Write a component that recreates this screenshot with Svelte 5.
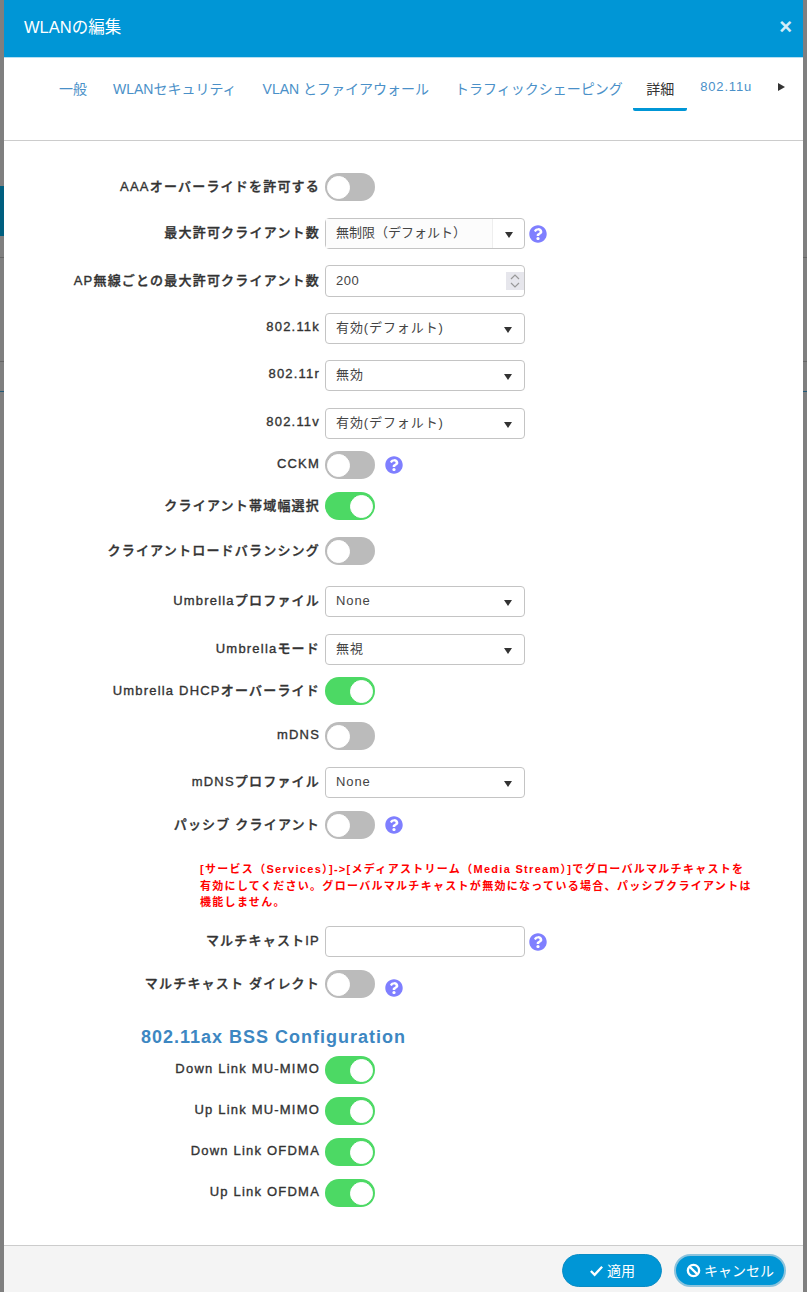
<script>
	const tabs = ['一般', 'WLANセキュリティ', 'VLAN とファイアウォール', 'トラフィックシェーピング', '詳細'];

	const rowsTop = [
		{ label: 'AAAオーバーライドを許可する', type: 'toggle', gap: 0 },
		{ label: '最大許可クライアント数', type: 'split', value: '無制限（デフォルト）', help: true, gap: 17 },
		{ label: 'AP無線ごとの最大許可クライアント数', type: 'number', value: '200', gap: 16 },
		{ label: '802.11k', type: 'select', value: '有効(デフォルト)', gap: 16 },
		{ label: '802.11r', type: 'select', value: '無効', gap: 16 },
		{ label: '802.11v', type: 'select', value: '有効(デフォルト)', gap: 17 },
		{ label: 'CCKM', type: 'toggle', help: true, gap: 12 },
		{ label: 'クライアント帯域幅選択', type: 'toggle', on: true, gap: 13 },
		{ label: 'クライアントロードバランシング', type: 'toggle', gap: 17 },
		{ label: 'Umbrellaプロファイル', type: 'select', value: 'None', gap: 21 },
		{ label: 'Umbrellaモード', type: 'select', value: '無視', gap: 17 },
		{ label: 'Umbrella DHCPオーバーライド', type: 'toggle', on: true, gap: 12 },
		{ label: 'mDNS', type: 'toggle', gap: 17 },
		{ label: 'mDNSプロファイル', type: 'select', value: 'None', gap: 17 },
		{ label: 'パッシブ クライアント', type: 'toggle', help: true, gap: 13 }
	];

	const rowsBottom = [
		{ label: 'マルチキャストIP', type: 'text', help: true, gap: 0 },
		{ label: 'マルチキャスト ダイレクト', type: 'toggle', help: true, drop: true, gap: 13 }
	];

	const bssRows = [
		{ label: 'Down Link MU-MIMO', type: 'toggle', on: true, gap: 0 },
		{ label: 'Up Link MU-MIMO', type: 'toggle', on: true, gap: 13 },
		{ label: 'Down Link OFDMA', type: 'toggle', on: true, gap: 13 },
		{ label: 'Up Link OFDMA', type: 'toggle', on: true, gap: 13 }
	];
</script>

{#snippet help(wide, drop)}
	<svg class="help" class:wide class:drop viewBox="0 0 512 512" aria-hidden="true">
		<path
			d="M504 256c0 136.997-111.043 248-248 248S8 392.997 8 256C8 119.083 119.043 8 256 8s248 111.083 248 248zM262.655 90c-54.497 0-89.255 22.957-116.549 63.758-3.536 5.286-2.353 12.415 2.715 16.258l34.699 26.31c5.205 3.947 12.621 3.008 16.665-2.122 17.864-22.658 30.113-35.797 57.303-35.797 20.429 0 45.698 13.148 45.698 32.958 0 14.976-12.363 22.667-32.534 33.976C247.128 238.528 216 254.941 216 296v4c0 6.627 5.373 12 12 12h56c6.627 0 12-5.373 12-12v-1.333c0-28.462 83.186-29.647 83.186-106.667 0-58.002-60.165-106-116.531-106zM256 338c-25.365 0-46 20.635-46 46 0 25.364 20.635 46 46 46s46-20.636 46-46c0-25.365-20.635-46-46-46z"
		/>
	</svg>
{/snippet}

{#snippet row(r)}
	<div class="row" style:margin-top="{r.gap}px">
		<span class="label">{r.label}</span>
		{#if r.type === 'toggle'}
			<span class="toggle" class:on={r.on}><span class="knob"></span></span>
			{#if r.help}{@render help(true, r.drop)}{/if}
		{:else if r.type === 'split'}
			<div class="field split">
				<span class="split-value">{r.value}</span>
				<span class="split-btn"><i class="caret"></i></span>
			</div>
			{@render help(false, false)}
		{:else if r.type === 'select'}
			<div class="field select">
				<span>{r.value}</span>
				<i class="caret"></i>
			</div>
		{:else if r.type === 'number'}
			<div class="field number">
				<span>{r.value}</span>
				<span class="spin">
					<svg viewBox="0 0 14 18" aria-hidden="true">
						<path d="M3 7l4-4 4 4M3 11l4 4 4-4" />
					</svg>
				</span>
			</div>
		{:else}
			<div class="field"></div>
			{#if r.help}{@render help(false, false)}{/if}
		{/if}
	</div>
{/snippet}

<div class="backdrop">
	<div class="strip-teal"></div>
	<div class="page-line l1"></div>
	<div class="page-line l2"></div>
	<div class="page-line l3"></div>
	<div class="modal">
		<header class="head">
			<h1>WLANの編集</h1>
			<span class="close">×</span>
		</header>

		<nav class="tabs">
			{#each tabs as tab, i}
				<span class="tab" class:active={i === tabs.length - 1}>{tab}</span>
			{/each}
			<span class="tab tab-up">802.11u</span>
			<i class="more"></i>
		</nav>

		<div class="body">
			{#each rowsTop as r}
				{@render row(r)}
			{/each}

			<p class="note">
				[サービス（Services）]->[メディアストリーム（Media Stream）]でグローバルマルチキャストを<br />有効にしてください。グローバルマルチキャストが無効になっている場合、パッシブクライアントは<br />機能しません。
			</p>

			{#each rowsBottom as r}
				{@render row(r)}
			{/each}

			<h2>802.11ax BSS Configuration</h2>

			{#each bssRows as r}
				{@render row(r)}
			{/each}
		</div>

		<footer class="foot">
			<button class="btn apply">
				<svg viewBox="0 0 16 16" aria-hidden="true"><path d="M2 8.500l4 4 8-8.500" /></svg>
				適用
			</button>
			<button class="btn cancel">
				<svg viewBox="0 0 16 16" aria-hidden="true">
					<circle cx="8" cy="8" r="6" />
					<path d="M3.800 3.800l8.400 8.400" />
				</svg>
				キャンセル
			</button>
		</footer>
	</div>
</div>

<style>
	:global(body) {
		margin: 0;
		background: #7f7f7f;
	}

	.backdrop {
		position: relative;
		height: 1292px;
		overflow: hidden;
		padding: 0 4px;
		box-sizing: border-box;
		font-family: 'Liberation Sans', 'Noto Sans CJK JP', sans-serif;
		color: #333;
	}

	.strip-teal {
		position: absolute;
		left: 0;
		top: 186px;
		width: 4px;
		height: 50px;
		background: #005f7f;
	}

	.page-line {
		position: absolute;
		left: 0;
		right: 0;
		height: 1px;
		background: #666;
	}

	.l1 {
		top: 257px;
	}

	.l2 {
		top: 361px;
	}

	.l3 {
		top: 391px;
		background: #225a78;
	}

	.modal {
		position: relative;
		height: 100%;
		background: #fff;
		display: flex;
		flex-direction: column;
	}

	.head {
		height: 58px;
		background: #0096d6;
		border-bottom: 1px solid #b5dff2;
		box-sizing: border-box;
		display: flex;
		align-items: center;
		justify-content: space-between;
		padding: 0 11px 5px 20px;
		color: #fff;
		flex-shrink: 0;
	}

	h1 {
		margin: 0;
		font-size: 16.500px;
		font-weight: 400;
	}

	.close {
		font-size: 22px;
		font-weight: 700;
		color: #d3edf8;
		line-height: 1;
		margin-top: 2px;
	}

	.tabs {
		height: 83px;
		flex-shrink: 0;
		border-bottom: 1px solid #ccc;
		box-sizing: border-box;
		display: flex;
		align-items: flex-start;
		padding: 19px 0 0 42px;
		font-size: 14px;
	}

	.tab {
		height: 31px;
		padding: 0 13px;
		color: #4a90c8;
		line-height: 24px;
		white-space: nowrap;
		box-sizing: content-box;
	}

	.tab.active {
		color: #333;
		border-bottom: 3px solid #0096d6;
		border-radius: 2px;
		margin-left: -2.500px;
	}

	.tab-up {
		line-height: 20px;
		letter-spacing: 0.800px;
		font-size: 13px;
	}

	.more {
		width: 0;
		height: 0;
		margin: 6px 0 0 13px;
		border-left: 7px solid #333;
		border-top: 4px solid transparent;
		border-bottom: 4px solid transparent;
	}

	.body {
		flex: 1;
		padding-top: 32px;
	}

	.row {
		display: flex;
		align-items: center;
		gap: 5px;
	}

	.label {
		width: 316px;
		flex-shrink: 0;
		text-align: right;
		font-size: 13px;
		font-weight: 500;
		letter-spacing: 1.200px;
		-webkit-text-stroke: 0.350px #333;
		color: #333;
		white-space: nowrap;
		position: relative;
		top: -2px;
	}

	.toggle {
		width: 50px;
		height: 28px;
		border-radius: 14px;
		background: #bbb;
		display: flex;
		align-items: center;
		padding: 0 2px;
		box-sizing: border-box;
		flex-shrink: 0;
	}

	.toggle.on {
		background: #4cd964;
		justify-content: flex-end;
	}

	.knob {
		width: 21px;
		height: 21px;
		border-radius: 50%;
		background: #fff;
		border: 1px solid #fff;
	}

	.field {
		width: 200px;
		height: 31px;
		box-sizing: border-box;
		border: 1px solid #c4c4c4;
		border-radius: 4px;
		background: #fff;
		font-size: 13px;
		letter-spacing: 0.900px;
		display: flex;
		align-items: center;
		flex-shrink: 0;
		color: #444;
		line-height: 27px;
	}

	.select {
		justify-content: space-between;
		padding: 0 12px 0 10px;
	}

	.select span {
		margin-top: -2px;
	}

	.split-value {
		flex: 1;
		height: 100%;
		display: flex;
		align-items: center;
		padding: 0 0 2px 10px;
		box-sizing: border-box;
		border-right: 1px solid #eee;
		background: #fcfcfc;
		letter-spacing: 0;
	}

	.split-btn {
		width: 31px;
		display: flex;
		justify-content: center;
	}

	.number {
		height: 32px;
		justify-content: space-between;
		padding: 0 0 0 10px;
		letter-spacing: 0.500px;
	}

	.number span:first-child {
		margin-top: -2px;
	}

	.spin {
		width: 18px;
		height: 18px;
		background: #e6e6ec;
		display: flex;
		align-items: center;
		justify-content: center;
	}

	.spin svg {
		width: 14px;
		height: 18px;
		fill: none;
		stroke: #999;
		stroke-width: 1.200;
	}

	.caret {
		width: 0;
		height: 0;
		border-top: 6px solid #333;
		border-left: 4px solid transparent;
		border-right: 4px solid transparent;
		margin-top: 2px;
	}

	.help {
		width: 18px;
		height: 18px;
		fill: #7f7fff;
		margin-left: -1px;
		flex-shrink: 0;
	}

	.help.wide {
		margin-left: 5px;
	}

	.help.drop {
		position: relative;
		top: 4px;
	}

	.note {
		margin: 22px 0 15px 196px;
		color: #f00;
		font-size: 11px;
		font-weight: 700;
		line-height: 16.500px;
		letter-spacing: 1.300px;
		height: 50px;
		white-space: nowrap;
	}

	h2 {
		margin: 27px 0 7px 137px;
		font-size: 18px;
		font-weight: 700;
		letter-spacing: 1px;
		color: #3d87c2;
		line-height: 24px;
	}

	.foot {
		height: 47px;
		flex-shrink: 0;
		background: #f4f4f4;
		border-top: 1px solid #ccc;
		box-sizing: border-box;
		display: flex;
		justify-content: flex-end;
		align-items: center;
		gap: 12px;
		padding: 2px 17px 0 0;
	}

	.btn {
		height: 33px;
		border-radius: 17px;
		background: #0096d6;
		color: #fff;
		border: 1px solid #0a8cc4;
		font-family: inherit;
		font-size: 14px;
		display: flex;
		align-items: center;
		justify-content: center;
		gap: 3px;
		padding: 0;
	}

	.btn svg {
		width: 15px;
		height: 15px;
		fill: none;
		stroke: #fff;
		stroke-width: 2.500;
	}

	.apply {
		width: 100px;
	}

	.cancel {
		width: 112px;
		border: 2px solid #8cc3dc;
	}
</style>
